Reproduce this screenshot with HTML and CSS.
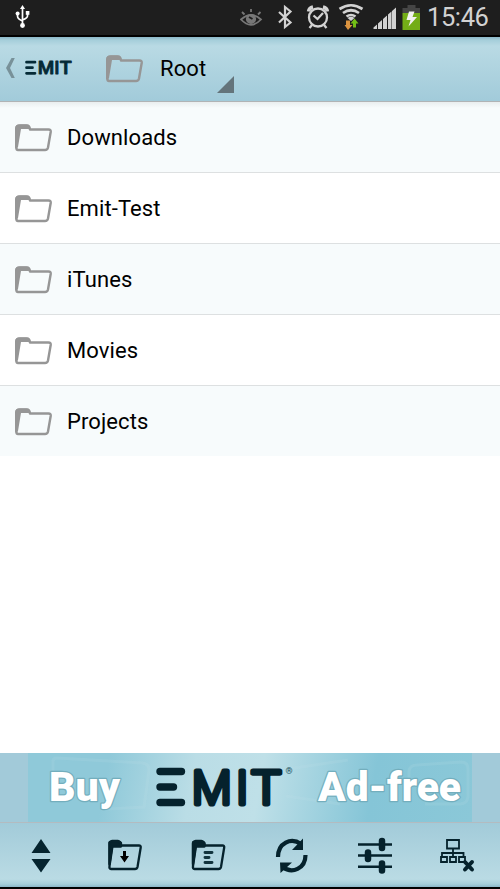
FILE: index.html
```html
<!DOCTYPE html>
<html lang="en">
<head>
<meta charset="utf-8">
<title>Emit</title>
<link rel="stylesheet" href="styles.css">
</head>
<body>
<svg class="defs" width="0" height="0">
  <symbol id="folder" viewBox="0 0 38 28">
    <path d="M2.500 25V4Q2.500 1.500 6 1.500H13Q15.500 1.500 16 5.500H34.500Q37 5.500 36.700 8L34 23.500Q33.500 26 31 26H4Q2.200 26 2.200 23V4" fill="none" stroke="currentColor" stroke-width="2.400" stroke-linejoin="round"/>
    <path d="M1 24V5Q1 .5 5 .5H12Q15.800 .5 16 5H7L4 23Z" fill="currentColor"/>
  </symbol>
</svg>
<main class="phone">
  <header class="status">
    <svg class="usb" width="16" height="24" viewBox="0 0 16 24" fill="none" stroke="#fff" stroke-width="1.7">
      <path d="M7.5 3V19M2.5 8V11Q2.5 14 7.5 16M12.5 8V11Q12.5 13 7.5 15"/><path d="M7.5 0L10 4H5Z" fill="#fff" stroke="none"/><circle cx="7.5" cy="20.5" r="2.4" fill="#fff" stroke="none"/><circle cx="2.6" cy="8.500" r="2" fill="#fff" stroke="none"/><path d="M10.8 6H14.4V9.8H10.8Z" fill="#fff" stroke="none"/>
    </svg>
    <svg class="tray" width="184" height="36" viewBox="240 0 184 36">
      <g fill="none" stroke="#777" stroke-width="1.8"><path d="M241 19.500Q251 10.500 261 19.500Q251 30 241 19.500Z"/><circle cx="251" cy="19" r="4.2" fill="#777"/><path d="M242 12L244.500 14.500M251 9V12M260.500 12L258 14.500"/></g><path d="M249 17L252.500 19" stroke="#1e1e1e" stroke-width="2"/>
      <path d="M279 12L290.500 22.500L285 27V7L290.500 11.500L279 22.500" fill="none" stroke="#d2d2d2" stroke-width="2.200"/>
      <g fill="none" stroke="#d2d2d2" stroke-width="2.300"><circle cx="318" cy="17.500" r="9"/><path d="M313.500 15.500L317.500 19L323 13M312 25L309.500 28M324 25L326.500 28"/><path d="M308.500 11.500Q309 8 313 7M323 7Q327 8 327.500 11.500" stroke-width="3.400"/></g>
      <g fill="none" stroke="#d2d2d2" stroke-width="2.700"><path d="M339.500 9Q351 1.500 362.500 9M343 13Q351 7.500 359 13M346.500 16.500Q351 13.500 355.500 16.500"/></g><path d="M347.500 18Q351 15.500 354.500 18L351 21Z" fill="#d2d2d2"/>
      <path d="M346 20.500H350V25H352.500L348 30L344.500 25H346Z" fill="#dc9440"/><path d="M353 27.500V23.500H350.500L354.500 18.500L358.500 23.500H356V27.500Z" fill="#72bf16"/>
      <path d="M373.500 29V27.500L377 24.500V29ZM378 29V23.500L382 20V29ZM383 29V19L387 15.500V29ZM388 29V14.500L391.500 11.500V29ZM392 29V11L396 7.500V29Z" fill="#d2d2d2"/>
      <path d="M407.500 5H415.500V8H420V13H402.500V8H407.500Z" fill="#454545"/><path d="M402.500 13H420V30H402.500Z" fill="#73ad17"/><path d="M409 11.500H414.500L412.500 17H417L408.500 26.500L410.500 20H406.500Z" fill="#f2f2f2"/>
    </svg>
    <time class="clock">15:46</time>
  </header>
  <nav class="bar">
    <svg class="back" width="12" height="22" viewBox="0 0 12 22"><path d="M6.500 1H9.800L5 11L9.800 21H6.500L1 11Z" fill="#789199"/></svg>
    <svg class="brand" width="54" height="24" viewBox="0 -3 54 24"><g fill="none" stroke="#052a36" stroke-width="2.700" stroke-linecap="round"><path d="M2.500 2.200H11M2.500 7.700H8.500M2.500 13.300H11"/></g><g class="brand-text"><text x="13.800" y="14.200" textLength="16.500" lengthAdjust="spacingAndGlyphs">M</text><text x="30.200" y="14.200">I</text><text x="35.800" y="14.200" textLength="12" lengthAdjust="spacingAndGlyphs">T</text></g></svg>
    <svg class="icon-folder root-folder"><use href="#folder"/></svg>
    <span class="label root-label">Root</span>
    <svg class="corner" width="17" height="17" viewBox="0 0 17 17"><path d="M17 0V17H0Z" fill="#64747b"/></svg>
  </nav>
  <ul class="list">
    <li class="row"><svg class="icon-folder"><use href="#folder"/></svg><span class="label">Downloads</span></li>
    <li class="row"><svg class="icon-folder"><use href="#folder"/></svg><span class="label">Emit-Test</span></li>
    <li class="row"><svg class="icon-folder"><use href="#folder"/></svg><span class="label">iTunes</span></li>
    <li class="row"><svg class="icon-folder"><use href="#folder"/></svg><span class="label">Movies</span></li>
    <li class="row"><svg class="icon-folder"><use href="#folder"/></svg><span class="label">Projects</span></li>
  </ul>
  <section class="ad">
    <svg class="banner" width="444" height="69" viewBox="28 0 444 69">
      <g fill="none" stroke="#c3e6eb" stroke-opacity=".14" stroke-width="3"><path d="M53 47V8Q53 5 57 5L143 10Q149 11 149 17L144 54L108 56M288 16L348 7M286 43L340 51M409 47V18Q410 12 417 12L461 9Q468 9 468 16V44Q467 51 460 51H425"/></g>
      <g class="ad-text"><text x="49" y="48" textLength="71" lengthAdjust="spacingAndGlyphs">Buy</text><text x="318" y="48" textLength="143" lengthAdjust="spacingAndGlyphs">Ad-free</text></g>
      <path d="M160 18.500H181.500M160 34H173.500M160 49.500H181.500" stroke="#05222d" stroke-width="7.400" stroke-linecap="round"/>
      <g class="ad-brand"><text x="192" y="50.500" textLength="39.500" lengthAdjust="spacingAndGlyphs">M</text><text x="236" y="50.500">I</text><text x="251.500" y="50.500" textLength="29.500" lengthAdjust="spacingAndGlyphs">T</text></g>
      <text x="285.500" y="20.500" class="registered">®</text>
    </svg>
  </section>
  <footer class="tools">
    <svg class="toolset" width="500" height="64" viewBox="0 823 500 64">
      <path d="M41 839L50.500 853H31.500ZM31.500 859H50.500L41 872.500Z" fill="#05242f"/>
      <g fill="none" stroke="#05222c" stroke-width="2.300" stroke-linejoin="round">
        <path id="tool-folder" d="M109.500 868V843.500Q109.500 841.500 112 841.500H118Q121 841.500 121 845.500H139Q141 845.500 140.700 847.500L137.500 867Q137 869 135 869H111Q109 869 109.500 866L112.500 846"/>
        <path d="M109.500 842.500L112 841H118L121 843V846.500H112L109.500 864Z" fill="#05222c"/>
        <use href="#tool-folder" x="83.500"/><path d="M193 842.500L195.500 841H201.500L204.500 843V846.500H195.500L193 864Z" fill="#05222c"/>
      </g>
      <path d="M123 851H126V856H129L124.500 862.500L120 856H123Z" fill="#000"/>
      <path d="M205 852.500H212M205 857.500H209M205 862.500H212" stroke="#12343e" stroke-width="2.900" stroke-linecap="round"/>
      <g fill="none" stroke="#05222c" stroke-width="4.200"><path d="M278 857C278 843 291 837 301 844"/><path d="M305.500 855C305.500 869 292 874 282.500 867"/></g><path d="M303 838.500V850H292ZM280.500 873L280 862.500H292Z" fill="#05222c"/>
      <g stroke="#05222c"><path d="M358 844.500H392M358 855.500H392M358 866.800H392" stroke-width="2.400"/><path d="M382 841V848M368 852.500V859M382 863.500V870.500" stroke-width="6.500" stroke-linecap="round"/></g>
      <g fill="none" stroke="#05222c" stroke-width="1.800"><path d="M447 840H459V848.500H447ZM453 848.500V857M442 857V853H463.500V857M441 857H447V862H441ZM450 857H456V862H450ZM459 857H465V862H459Z"/><path d="M465 862L472 869.500M472 862L465 869.500" stroke-width="4" stroke-linecap="round"/></g>
    </svg>
  </footer>
</main>
</body>
</html>
```
FILE: styles.css
```css
* { box-sizing: border-box; }
body { margin: 0; background: #fff; font-family: Roboto, "Liberation Sans", sans-serif; color: #000; }
svg { display: block; flex: none; }
.defs { position: absolute; }
.phone { width: 500px; height: 889px; display: flex; flex-direction: column; overflow: hidden; }
.status { height: 37px; flex: none; display: flex; align-items: flex-start; background: #1e1e1e; border-bottom: 2px solid #000; }
.usb { margin: 5px 0 0 15px; }
.tray { margin-left: 209px; }
.clock { margin-left: 3px; font-size: 25.500px; line-height: 35px; color: #d2d2d2; white-space: nowrap; letter-spacing: -.4px; }
.bar { height: 65px; flex: none; display: flex; align-items: flex-start; background: linear-gradient(#8bb7c8 0, #a5ceda 3px, #b9dae4 9px, #a2cbda 63px); border-bottom: 1px solid #b0b3b5; }
.back { margin: 20px 0 0 5px; }
.brand { margin: 20px 0 0 7px; }
.brand-text { font-size: 18.500px; font-weight: 500; fill: #052a36; stroke: #052a36; stroke-width: .8px; stroke-linejoin: round; }
.icon-folder { width: 38px; height: 28px; color: #969696; }
.root-folder { margin: 18px 0 0 27px; }
.label { font-size: 22px; line-height: 28px; letter-spacing: .1px; white-space: nowrap; }
.root-label { margin: 18px 0 0 17px; }
.corner { margin: 39px 0 0 11px; }
.list { list-style: none; margin: 0; padding: 0; flex: 1; }
.row { height: 71px; display: flex; align-items: center; gap: 15px; padding: 2px 0 0 14px; border-bottom: 1px solid #dde0e1; }
.row:nth-child(odd) { background: #f7fbfc; }
.row:first-child { background: linear-gradient(#e9eeef, #f7fbfc 6px); }
.row:last-child { height: 70px; border-bottom: 0; }
.ad { height: 70px; flex: none; display: flex; justify-content: center; background: #a2cad9; border-bottom: 1px solid #b3bbc0; }
.banner { background: linear-gradient(100deg, #8fc9d9 0, #8fc9d9 18%, #badde6 37%, #bfe0e8 52%, #85c5d7 77%, #8bc8d8 100%); }
.ad-text { font-size: 41px; font-weight: 900; fill: #fff; stroke: #73aebd; stroke-width: 2.500px; paint-order: stroke; stroke-linejoin: round; }
.ad-brand { font-size: 46px; font-weight: 300; fill: #05222d; stroke: #05222d; stroke-width: 4.800px; stroke-linejoin: round; }
.registered { font-size: 9px; font-weight: 700; fill: #24515e; }
.tools { height: 66px; flex: none; background: linear-gradient(#a2cbd9 0, #badbe4 56px, #a5ced9 61px, #8bb7c8 64px); border-bottom: 2px solid #000; }
```
